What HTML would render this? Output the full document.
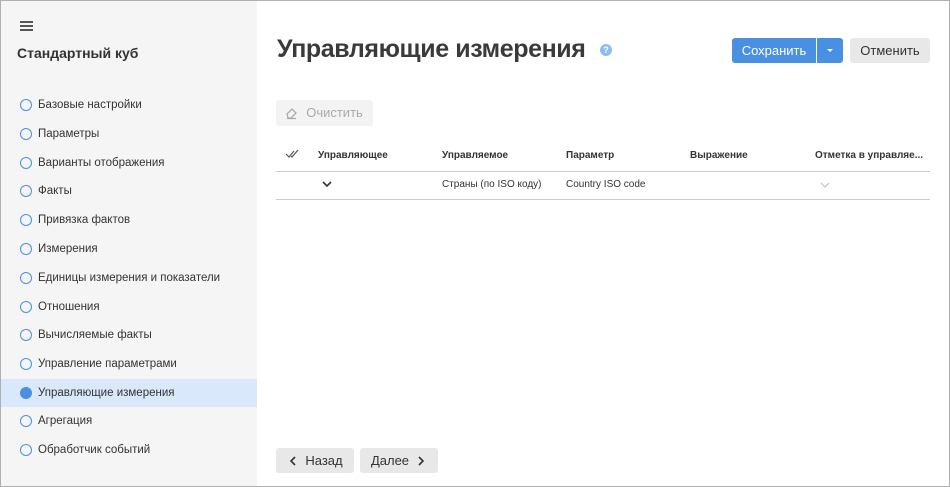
<!DOCTYPE html>
<html><head><meta charset="utf-8"><style>
*{margin:0;padding:0;box-sizing:border-box}
body{width:950px;height:487px;overflow:hidden;font-family:"Liberation Sans",sans-serif;background:#fff;position:relative;color:#333}
.frame{position:absolute;left:0;top:0;width:950px;height:487px;border:1px solid #b0b0b0}
.side{position:absolute;left:1px;top:1px;width:256px;height:485px;background:#f5f5f5}
.abs{position:absolute}
.item{position:absolute;left:0;width:256px;height:28px;font-size:11.5px;color:#333;line-height:28px;padding-left:37px}
.item:before{content:"";position:absolute;left:19px;top:8px;width:12px;height:12px;border:1.5px solid #4a90e2;border-radius:50%;box-sizing:border-box}
.item.act{background:#d9e8fb}
.item.act:before{background:#4a90e2}
.th{position:absolute;top:150px;font-size:10px;font-weight:bold;color:#333}
.td{position:absolute;top:179px;font-size:10px;color:#333}
.btn{position:absolute;border-radius:3px;font-size:13px;text-align:center}
</style></head><body>
<div class="side">
<div class="abs" style="left:19px;top:20px;width:13px;height:2px;background:#555;box-shadow:0 4px 0 #555,0 8px 0 #555"></div>
<div class="abs" style="left:16px;top:44px;font-size:14px;font-weight:bold;color:#333">Стандартный куб</div>
<div class="item" style="top:90px">Базовые настройки</div>
<div class="item" style="top:119px">Параметры</div>
<div class="item" style="top:148px">Варианты отображения</div>
<div class="item" style="top:176px">Факты</div>
<div class="item" style="top:205px">Привязка фактов</div>
<div class="item" style="top:234px">Измерения</div>
<div class="item" style="top:263px">Единицы измерения и показатели</div>
<div class="item" style="top:292px">Отношения</div>
<div class="item" style="top:320px">Вычисляемые факты</div>
<div class="item" style="top:349px">Управление параметрами</div>
<div class="item act" style="top:378px">Управляющие измерения</div>
<div class="item" style="top:406px">Агрегация</div>
<div class="item" style="top:435px">Обработчик событий</div>
</div>
<div class="abs" style="left:277px;top:35px;font-size:25px;font-weight:bold;color:#3a3a3a;letter-spacing:-0.4px">Управляющие измерения</div>
<div class="abs" style="left:600px;top:44px;width:12px;height:12px;border-radius:50%;background:#8fbcef;color:#fff;font-size:9px;font-weight:bold;text-align:center;line-height:12px">?</div>
<div class="btn" style="left:732px;top:38px;width:84px;height:25px;background:#4a90e2;color:#fff;line-height:25px;border-radius:3px 0 0 3px">Сохранить</div>
<div class="btn" style="left:817px;top:38px;width:26px;height:25px;background:#4a90e2;border-radius:0 3px 3px 0"><div class="abs" style="left:10px;top:11px;border:3px solid transparent;border-top:3px solid #fff"></div></div>
<div class="btn" style="left:850px;top:38px;width:80px;height:25px;background:#e8e8e8;color:#333;line-height:25px">Отменить</div>
<div class="btn" style="left:276px;top:100px;width:97px;height:26px;background:#f3f3f3;color:#aaa;line-height:26px;padding-left:20px;font-size:13px">Очистить
<svg class="abs" style="left:9px;top:7px" width="13" height="13" viewBox="0 0 13 13"><path d="M2 7l5-5 4 4-5 5H3z M2 11.5h9" fill="none" stroke="#aaa" stroke-width="1.3"/></svg></div>
<svg class="abs" style="left:285px;top:149px" width="16" height="10" viewBox="0 0 16 10"><path d="M1 5l3 3 5-6M6 7l1 1 6-7" fill="none" stroke="#555" stroke-width="1.2"/></svg>
<div class="th" style="left:318px">Управляющее</div>
<div class="th" style="left:442px">Управляемое</div>
<div class="th" style="left:566px">Параметр</div>
<div class="th" style="left:690px">Выражение</div>
<div class="th" style="left:815px">Отметка в управляе...</div>
<div class="abs" style="left:276px;top:171px;width:654px;height:1px;background:#ccc"></div>
<svg class="abs" style="left:322px;top:181px" width="10" height="7" viewBox="0 0 10 7"><path d="M1 1l4 4 4-4" fill="none" stroke="#333" stroke-width="1.6"/></svg>
<div class="td" style="left:442px">Страны (по ISO коду)</div>
<div class="td" style="left:566px">Country ISO code</div>
<svg class="abs" style="left:820px;top:182px" width="10" height="6" viewBox="0 0 10 6"><path d="M1 1l4 4 4-4" fill="none" stroke="#bbb" stroke-width="1"/></svg>
<div class="abs" style="left:276px;top:199px;width:654px;height:1px;background:#ccc"></div>
<div class="btn" style="left:276px;top:448px;width:78px;height:25px;background:#e8e8e8;line-height:25px;padding-left:18px">Назад
<svg class="abs" style="left:14px;top:8px" width="6" height="10" viewBox="0 0 6 10"><path d="M5 1L1 5l4 4" fill="none" stroke="#333" stroke-width="1.6"/></svg></div>
<div class="btn" style="left:360px;top:448px;width:78px;height:25px;background:#e8e8e8;line-height:25px;padding-right:18px">Далее
<svg class="abs" style="left:58px;top:8px" width="6" height="10" viewBox="0 0 6 10"><path d="M1 1l4 4-4 4" fill="none" stroke="#333" stroke-width="1.6"/></svg></div>
<div class="frame"></div>
</body></html>
